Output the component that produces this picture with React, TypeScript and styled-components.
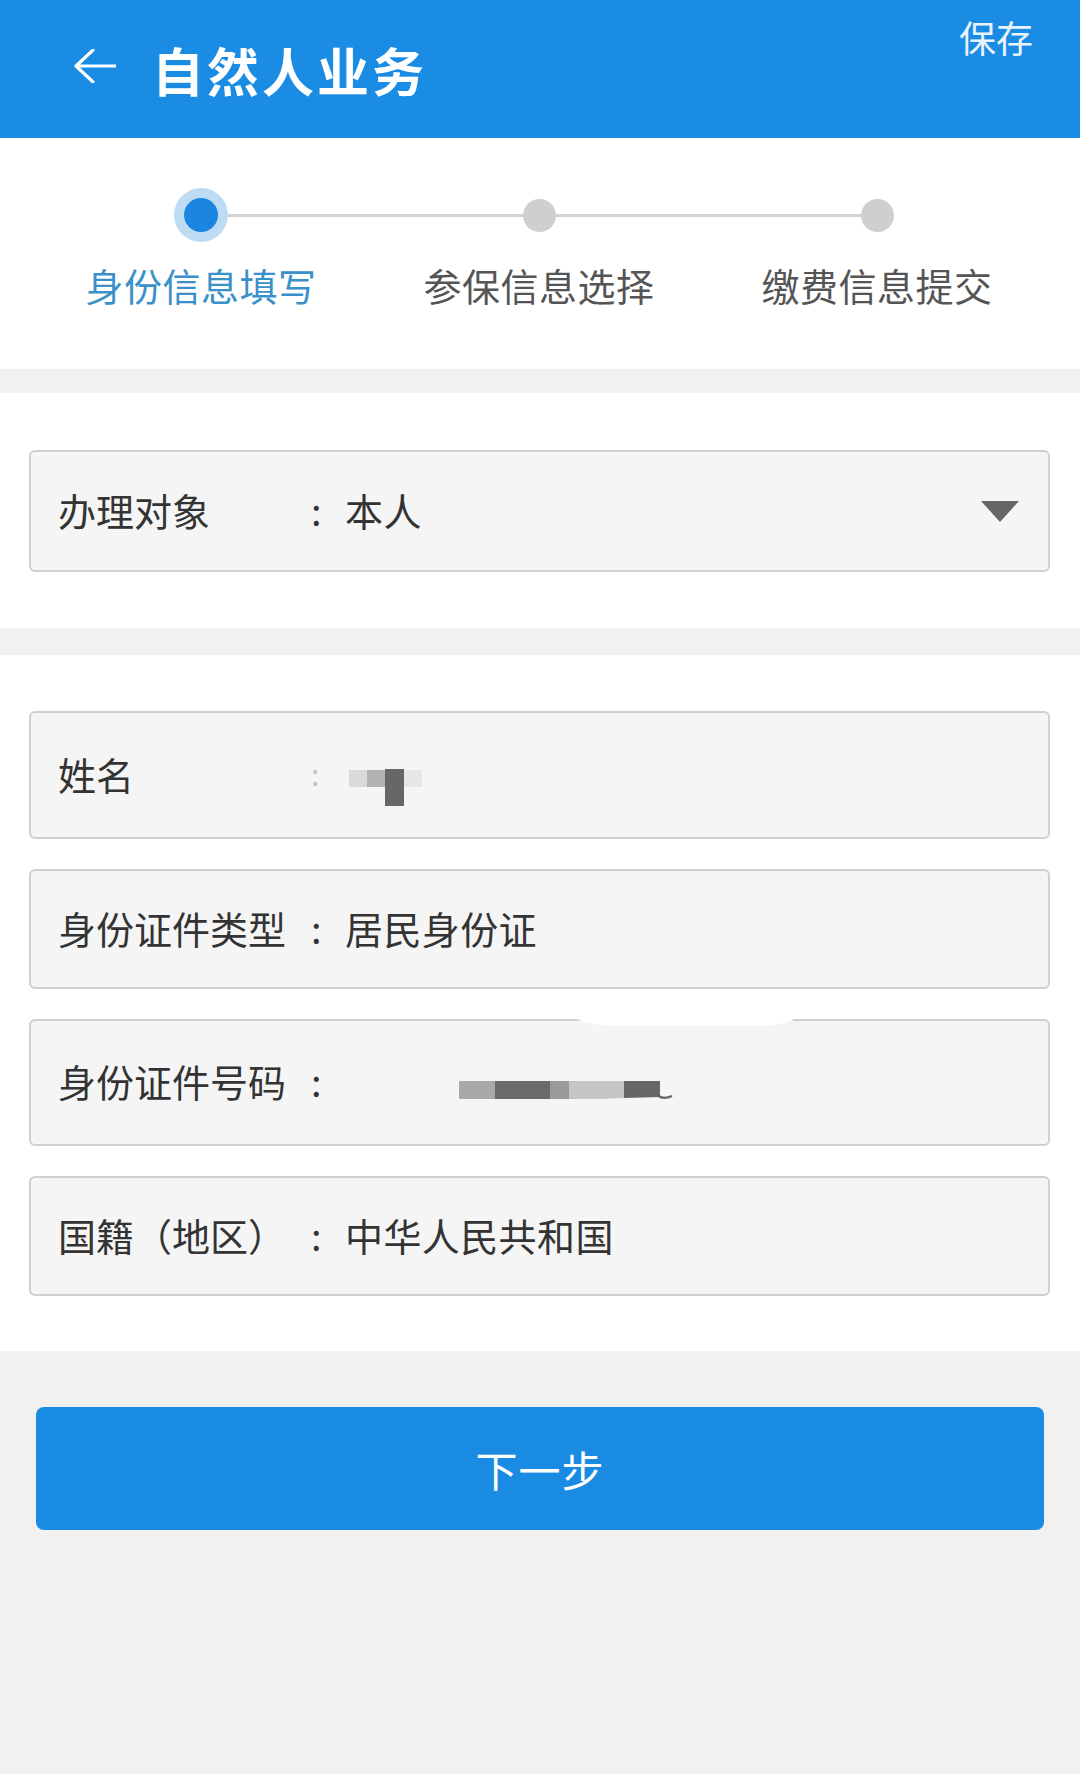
import React from 'react'
import styled, { createGlobalStyle } from 'styled-components'

const GlobalStyle = createGlobalStyle`
  html, body {
    margin: 0;
    padding: 0;
    background: #f1f1f1;
  }
  body {
    font-family: "Noto Sans CJK SC", "Noto Sans", sans-serif;
  }
`

interface IStep {
  title: string
  active?: boolean
}

const steps: IStep[] = [
  { title: '身份信息填写', active: true },
  { title: '参保信息选择' },
  { title: '缴费信息提交' },
]

const BackArrow = () => (
  <svg width="42" height="34" viewBox="0 0 42 34">
    <path d="M2 17 H41 M19 1 L2 17 L19 33" fill="none" stroke="#ffffff" strokeWidth="3.2" strokeLinecap="round" strokeLinejoin="round" />
  </svg>
)

const NameMosaic = () => (
  <svg width="73" height="37" viewBox="0 0 73 37">
    <rect x="0" y="1" width="18" height="17" fill="#dadada" />
    <rect x="18" y="1" width="18" height="17" fill="#b2b2b2" />
    <rect x="36" y="0" width="19" height="37" fill="#676767" />
    <rect x="55" y="1" width="18" height="17" fill="#e7e7e7" />
  </svg>
)

const IdMosaic = () => (
  <svg width="214" height="19" viewBox="0 0 214 19">
    <rect x="0" y="0" width="36" height="18" fill="#a9a9a9" />
    <rect x="36" y="0" width="55" height="18" fill="#6a6a6a" />
    <rect x="91" y="0" width="19" height="18" fill="#9a9a9a" />
    <path d="M110 0 H165 V17 L140 18 H110 Z" fill="#c5c5c5" />
    <path d="M165 0 H201 V16 L165 17 Z" fill="#666666" />
    <path d="M199 14 Q203 19 213 15" fill="none" stroke="#666666" strokeWidth="2.2" />
  </svg>
)

const App: React.FC = () => {
  return (
    <Page>
      <GlobalStyle />
      <Header>
        <BackButton><BackArrow /></BackButton>
        <Title>自然人业务</Title>
        <SaveText>保存</SaveText>
      </Header>

      <StepsSection>
        {steps.map((s, i) => (
          <Step key={s.title}>
            <DotRow>
              <Line $off={i === 0} />
              {s.active ? (<ActiveDot><Inner /></ActiveDot>) : (<Dot />)}
              <Line $off={i === steps.length - 1} />
            </DotRow>
            <StepLabel $active={s.active}>{s.title}</StepLabel>
          </Step>
        ))}
      </StepsSection>

      <Section $top={24} $pad={57}>
        <Field $h={122}>
          <Label>办理对象</Label>
          <Colon>:</Colon>
          <Value>本人</Value>
          <Caret width="38" height="21" viewBox="0 0 38 21">
            <polygon points="0,0 38,0 19,21" fill="#666666" />
          </Caret>
        </Field>
      </Section>

      <Section $top={27} $pad={56}>
        <FieldList>
          <Field $h={128}>
            <Label>姓名</Label>
            <Colon $faint>:</Colon>
            <MosaicWrap $left={4} $top={29}><NameMosaic /></MosaicWrap>
          </Field>
          <Field $h={120}>
            <Label>身份证件类型</Label>
            <Colon>:</Colon>
            <Value>居民身份证</Value>
          </Field>
          <Field $h={127}>
            <BorderSmudge />
            <Label>身份证件号码</Label>
            <Colon>:</Colon>
            <MosaicWrap $left={114} $top={19}><IdMosaic /></MosaicWrap>
          </Field>
          <Field $h={120}>
            <Label>国籍（地区）</Label>
            <Colon>:</Colon>
            <Value>中华人民共和国</Value>
          </Field>
        </FieldList>
      </Section>

      <Footer>
        <NextButton>下一步</NextButton>
      </Footer>
    </Page>
  )
}

export default App


const Page = styled.div`
width: 1080px;
min-height: 1774px;
background: #f1f1f1;
display: flex;
flex-direction: column;
`

const Header = styled.header`
height: 138px;
background: #1a8ce3;
display: flex;
align-items: center;
padding: 0 47px 0 74px;
box-sizing: border-box;
`

const BackButton = styled.div`
display: flex;
margin-bottom: 6px;
`

const Title = styled.h1`
margin: 2px 0 0 36px;
color: #ffffff;
font-size: 52px;
font-weight: 700;
letter-spacing: 3px;
line-height: 1.2;
`

const SaveText = styled.span`
align-self: flex-start;
margin: 15px 0 0 auto;
color: #e9f3fc;
font-size: 37px;
line-height: 1.2;
`

const StepsSection = styled.section`
height: 231px;
box-sizing: border-box;
background: #ffffff;
display: grid;
grid-template-columns: repeat(3, 338px);
padding: 50px 0 0 32px;
`

const Step = styled.div`
display: flex;
flex-direction: column;
align-items: center;
`

const DotRow = styled.div`
width: 100%;
height: 54px;
display: flex;
align-items: center;
`

const Line = styled.div<{ $off?: boolean }>`
flex: 1;
height: 3px;
background: ${(p) => (p.$off ? 'transparent' : '#d3d3d3')};
`

const Dot = styled.div`
width: 33px;
height: 33px;
flex-shrink: 0;
border-radius: 50%;
background: #cfcfcf;
`

const ActiveDot = styled.div`
width: 54px;
height: 54px;
flex-shrink: 0;
border-radius: 50%;
background: #bddcf4;
display: flex;
align-items: center;
justify-content: center;
`

const Inner = styled.div`
width: 34px;
height: 34px;
border-radius: 50%;
background: #1a86df;
`

const StepLabel = styled.div<{ $active?: boolean }>`
margin-top: 20px;
font-size: 38px;
line-height: 1.2;
letter-spacing: 0.5px;
color: ${(p) => (p.$active ? '#3a90c8' : '#555555')};
`

const Section = styled.section<{ $top: number; $pad: number }>`
margin-top: ${(p) => p.$top}px;
background: #ffffff;
padding: ${(p) => p.$pad}px 30px ${(p) => p.$pad - 1}px 29px;
`

const FieldList = styled.div`
display: flex;
flex-direction: column;
gap: 30px;
`

const Field = styled.div<{ $h: number }>`
position: relative;
height: ${(p) => p.$h}px;
box-sizing: border-box;
border: 2px solid #d0d0d0;
border-radius: 6px;
background: #f5f5f5;
display: flex;
align-items: center;
padding: 0 29px 4px 27px;
font-size: 38px;
color: #333333;
`

const Label = styled.span`
width: 252px;
flex-shrink: 0;
white-space: nowrap;
`

const Colon = styled.span<{ $faint?: boolean }>`
width: 34px;
flex-shrink: 0;
color: ${(p) => (p.$faint ? '#c4c4c4' : '#333333')};
font-size: ${(p) => (p.$faint ? '30px' : '38px')};
padding-left: 1px;
`

const Value = styled.span`
letter-spacing: 0.4px;
`

const MosaicWrap = styled.div<{ $left: number; $top: number }>`
display: flex;
margin-left: ${(p) => p.$left}px;
margin-top: ${(p) => p.$top}px;
`

const Caret = styled.svg`
margin-left: auto;
margin-top: 4px;
`

const BorderSmudge = styled.div`
position: absolute;
top: -4px;
left: 546px;
width: 218px;
height: 9px;
background: #ffffff;
border-radius: 0 0 40px 40px / 0 0 9px 9px;
`

const Footer = styled.div`
flex: 1;
background: #f1f1f1;
padding: 56px 36px 0 36px;
`

const NextButton = styled.button`
width: 100%;
height: 123px;
border: none;
border-radius: 8px;
background: #1a8be3;
color: #ffffff;
font-family: "Noto Sans CJK SC", sans-serif;
font-size: 42px;
letter-spacing: 1px;
`
